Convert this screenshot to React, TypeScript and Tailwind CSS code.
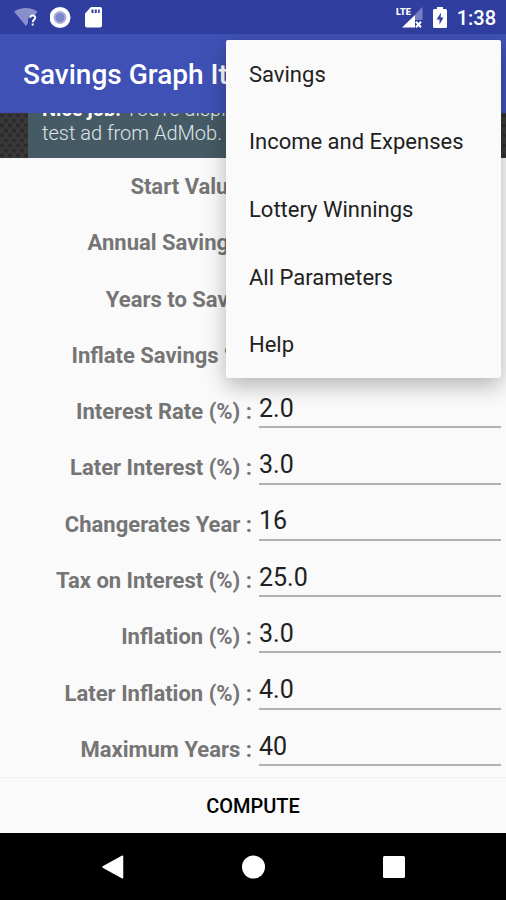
import { useState } from 'react';

const fields = [
  { id: 'start', label: 'Start Value :', value: '' },
  { id: 'annual', label: 'Annual Savings :', value: '' },
  { id: 'years', label: 'Years to Save :', value: '' },
  { id: 'inflate', label: 'Inflate Savings % :', value: '' },
  { id: 'interest', label: 'Interest Rate (%) :', value: '2.0' },
  { id: 'laterInterest', label: 'Later Interest (%) :', value: '3.0' },
  { id: 'changeYear', label: 'Changerates Year :', value: '16' },
  { id: 'tax', label: 'Tax on Interest (%) :', value: '25.0' },
  { id: 'inflation', label: 'Inflation (%) :', value: '3.0' },
  { id: 'laterInflation', label: 'Later Inflation (%) :', value: '4.0' },
  { id: 'maxYears', label: 'Maximum Years :', value: '40' },
];

const menuItems = ['Savings', 'Income and Expenses', 'Lottery Winnings', 'All Parameters', 'Help'];

const StatusBar = () => (
  <div className="flex h-[34px] items-center justify-between bg-[#303f9f] pl-3.5 pr-2.5 pt-0.5 text-white">
    <div className="flex items-center gap-3">
      <svg width="24" height="22" viewBox="0 0 24 22" aria-hidden="true">
        <path d="M0 4.500C6.500 -.2 17 -.2 23.500 4.500L21 8H16L14 12V16L12 19Z" fill="#8790ca" />
        <path d="M16.200 10.800C16.200 7.700 21.200 7.700 21.200 10.600C21.200 12.800 18.700 12.600 18.700 15.200" fill="none" stroke="#fff" strokeWidth="1.900" />
        <rect x="17.700" y="16.500" width="2" height="2" fill="#fff" />
      </svg>
      <svg width="22" height="22" viewBox="0 0 22 22" aria-hidden="true">
        <circle cx="10" cy="10.500" r="10.500" fill="#fff" />
        <circle cx="10" cy="10.500" r="6.500" fill="#a9b0dc" />
        <circle cx="10" cy="10.500" r="4.500" fill="#7b86c8" />
      </svg>
      <svg width="18" height="22" viewBox="0 0 18 22" aria-hidden="true">
        <path d="M7 0H16Q18 0 18 2V18.500Q18 20.500 16 20.500H3Q1 20.500 1 18.500V6.500Z" fill="#fff" />
        <path d="M7.500 2.500H9.500V6H7.500ZM10.800 2.500H12.800V6H10.800ZM14.100 2.500H15.700V6H14.100Z" fill="#303f9f" />
      </svg>
    </div>
    <div className="flex items-center">
      <svg width="28" height="22" viewBox="0 0 28 22" aria-hidden="true">
        <path d="M27.500 0V13H20V7.500Z" fill="#7580c2" />
        <path d="M7 20.500L20 8V20.500Z" fill="#fff" />
        <path d="M21 14.800L26 20.200M26 14.800L21 20.200" stroke="#fff" strokeWidth="2" />
        <text x="1" y="8" fontSize="9" fontWeight="900" fill="#fff">LTE</text>
      </svg>
      <svg className="ml-2.5" width="14" height="22" viewBox="0 0 14 22" aria-hidden="true">
        <path d="M4 2V0H10V2H12.500Q14 2 14 3.500V19.500Q14 21 12.500 21H1.500Q0 21 0 19.500V3.500Q0 2 1.500 2Z" fill="#fff" />
        <path d="M8 5.500L3.500 12.500H6.500V17.500L10.500 10.500H7.700Z" fill="#303f9f" />
      </svg>
      <span className="ml-2.5 text-xl font-medium">1:38</span>
    </div>
  </div>
);

// Dark perforated texture on both sides of the banner
const Perforation = () => (
  <svg className="h-full w-7 shrink-0" aria-hidden="true">
    <defs>
      <pattern id="dots" width="8" height="10" patternUnits="userSpaceOnUse">
        <rect width="8" height="10" fill="#383838" />
        <circle cx="2" cy="2.500" r="1.900" fill="#2a2a2a" />
        <circle cx="6" cy="7.500" r="1.900" fill="#2a2a2a" />
      </pattern>
    </defs>
    <rect width="100%" height="100%" fill="url(#dots)" />
  </svg>
);

const AdBanner = () => (
  <div className="flex h-[45px] overflow-hidden bg-[#2b2b2b]">
    <Perforation />
    <div className="flex flex-1 flex-col justify-end bg-[#455a64] px-3.5 pb-[13px] text-xl leading-6 text-[#dfe5e8]">
      <p className="whitespace-nowrap font-light">
        <b className="font-bold text-white">Nice job!</b> You're displaying a
        <br />
        test ad from AdMob.
      </p>
    </div>
    <Perforation />
  </div>
);

const OverflowMenu = () => (
  <ul className="absolute right-[5px] top-10 z-10 grid h-[338px] w-[275px] auto-rows-fr rounded-xs bg-[#fafafa] shadow-[0_8px_22px_rgba(0,0,0,0.28)]">
    {menuItems.map((item) => (
      <li key={item} className="flex">
        <button type="button" className="w-full px-[23px] pt-px text-left text-[22px] text-[#212121]">
          {item}
        </button>
      </li>
    ))}
  </ul>
);

const NavBar = () => (
  <nav className="flex h-[67px] items-center justify-center gap-[117px] bg-black">
    <button type="button" aria-label="Back">
      <svg width="24" height="24" viewBox="0 0 24 24">
        <path d="M3 12L22.500 1.200V22.800Z" fill="#fff" stroke="#fff" strokeWidth="1.500" strokeLinejoin="round" />
      </svg>
    </button>
    <button type="button" aria-label="Home">
      <svg width="24" height="24" viewBox="0 0 24 24">
        <circle cx="12.500" cy="12" r="11.500" fill="#fff" />
      </svg>
    </button>
    <button type="button" aria-label="Recent apps">
      <svg width="24" height="24" viewBox="0 0 24 24">
        <rect x="1" y="1" width="22" height="22" rx="1.500" fill="#fff" />
      </svg>
    </button>
  </nav>
);

const App = () => {
  const [values, setValues] = useState<Record<string, string>>(
    Object.fromEntries(fields.map((field) => [field.id, field.value]))
  );

  return (
    <div className="relative flex min-h-screen flex-col bg-[#fafafa] font-[Roboto,sans-serif]">
      <StatusBar />
      <header className="flex h-[79px] items-center bg-[#3f51b5] px-[23px] pt-0.5">
        <h1 className="text-[28px] font-medium text-white">Savings Graph It</h1>
      </header>
      <AdBanner />
      <OverflowMenu />
      <form className="flex flex-1 flex-col" onSubmit={(e) => e.preventDefault()}>
        <div className="grid flex-1 auto-rows-fr">
          {fields.map((field) => (
            <div key={field.id} className="grid grid-cols-2">
              <label
                htmlFor={field.id}
                className="flex items-center justify-end whitespace-nowrap pr-px pt-px text-[22px] font-bold text-[#757575]"
              >
                {field.label}
              </label>
              <div className="flex items-end pb-[11px] pl-1.5 pr-[5px]">
                <input
                  id={field.id}
                  value={values[field.id]}
                  onChange={(e) => setValues({ ...values, [field.id]: e.target.value })}
                  className="h-10 w-full min-w-0 border-b-2 border-[#b0b0b0] bg-transparent pt-0.5 text-[25px] text-[#212121] outline-none"
                />
              </div>
            </div>
          ))}
        </div>
        <button type="submit" className="h-14 border-t border-[#f0f0f0] text-xl font-medium text-black">
          COMPUTE
        </button>
      </form>
      <NavBar />
    </div>
  );
};

export default App;
